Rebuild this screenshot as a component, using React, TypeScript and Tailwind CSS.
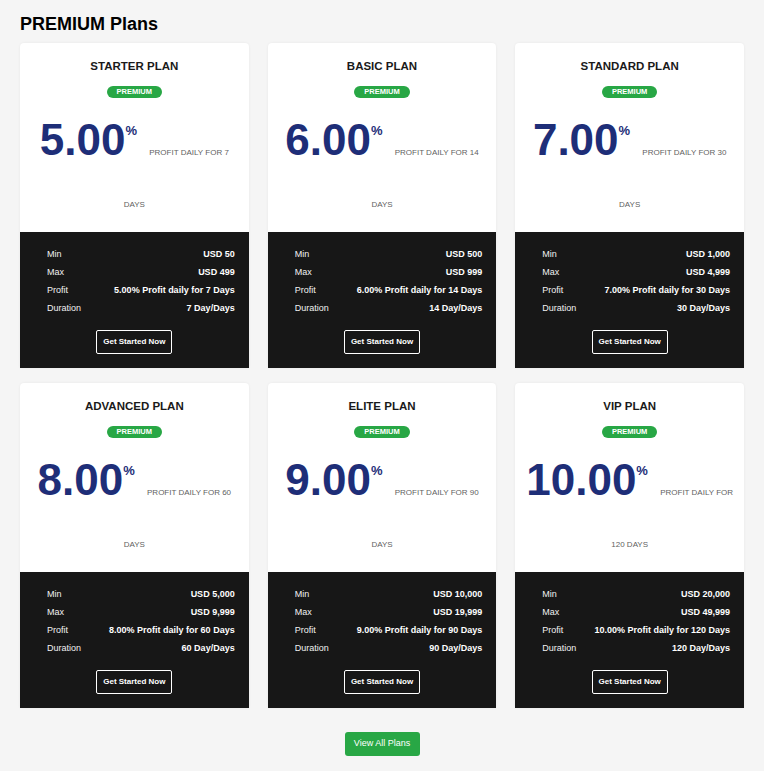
import React from "react";

// ---------- Types ----------
type Plan = {
    name: string;
    rate: string;
    days: number;
    min: string;
    max: string;
};

// ---------- Data ----------
const plans: Plan[] = [
    { name: "STARTER PLAN", rate: "5.00", days: 7, min: "USD 50", max: "USD 499" },
    { name: "BASIC PLAN", rate: "6.00", days: 14, min: "USD 500", max: "USD 999" },
    { name: "STANDARD PLAN", rate: "7.00", days: 30, min: "USD 1,000", max: "USD 4,999" },
    { name: "ADVANCED PLAN", rate: "8.00", days: 60, min: "USD 5,000", max: "USD 9,999" },
    { name: "ELITE PLAN", rate: "9.00", days: 90, min: "USD 10,000", max: "USD 19,999" },
    { name: "VIP PLAN", rate: "10.00", days: 120, min: "USD 20,000", max: "USD 49,999" },
];

// ---------- Components ----------
const Row = ({ label, value }: { label: string; value: string }) => (
    <div className="flex items-center justify-between text-[9px] leading-[18px]">
        <span className="text-[#f2f2f2]">{label}</span>
        <span className="font-bold text-white">{value}</span>
    </div>
);

const PlanCard = ({ plan }: { plan: Plan }) => (
    <div className="flex flex-col overflow-hidden rounded-t-[4px] bg-white shadow-[0_0_3px_rgba(0,0,0,0.06)]">
        {/* Top */}
        <div className="flex h-[189px] flex-col items-center px-[9px] pt-[16px] text-center">
            <h3 className="text-[11.5px] font-bold leading-[14px] text-[#1a1a1a]">
                {plan.name}
            </h3>
            <span className="mt-[13px] rounded-full bg-[#28a745] px-[10px] text-[7.5px] font-bold leading-[12px] text-white">
                PREMIUM
            </span>
            <div className="mt-[16px] w-full text-[44px] font-bold leading-[52px] text-[#1e2e78]">
                <span>{plan.rate}</span>
                <span className="align-[20px] text-[13px] leading-none">%</span>{" "}
                <span className="text-[8px] font-normal leading-none text-[#5f5f5f]">
                    PROFIT DAILY FOR {plan.days} DAYS
                </span>
            </div>
        </div>

        {/* Bottom */}
        <div className="flex flex-col bg-[#171717] pb-[14px] pt-[13px]">
            <div className="pl-[27px] pr-[14px]">
                <Row label="Min" value={plan.min} />
                <Row label="Max" value={plan.max} />
                <Row
                    label="Profit"
                    value={`${plan.rate}% Profit daily for ${plan.days} Days`}
                />
                <Row label="Duration" value={`${plan.days} Day/Days`} />
            </div>
            <div className="mt-[13px] flex justify-center">
                <button
                    type="button"
                    className="h-[24px] rounded-[2px] border border-white px-[6px] text-[8px] font-bold text-white"
                >
                    Get Started Now
                </button>
            </div>
        </div>
    </div>
);

export default function App() {
    return (
        <div
            className="min-h-screen bg-[#f5f5f5] px-[20px] pb-[16px] pt-[13px]"
            style={{ fontFamily: '"Liberation Sans", Arial, sans-serif' }}
        >
            <h2 className="mb-[8px] text-[18px] font-bold leading-[22px] text-black">
                PREMIUM Plans
            </h2>

            <div className="grid grid-cols-3 gap-x-[19px] gap-y-[15px]">
                {plans.map((p) => (
                    <PlanCard key={p.name} plan={p} />
                ))}
            </div>

            <div className="mt-[24px] flex justify-center">
                <button
                    type="button"
                    className="h-[24px] w-[75px] rounded-[3px] bg-[#28a745] text-[9px] text-white"
                >
                    View All Plans
                </button>
            </div>
        </div>
    );
}
